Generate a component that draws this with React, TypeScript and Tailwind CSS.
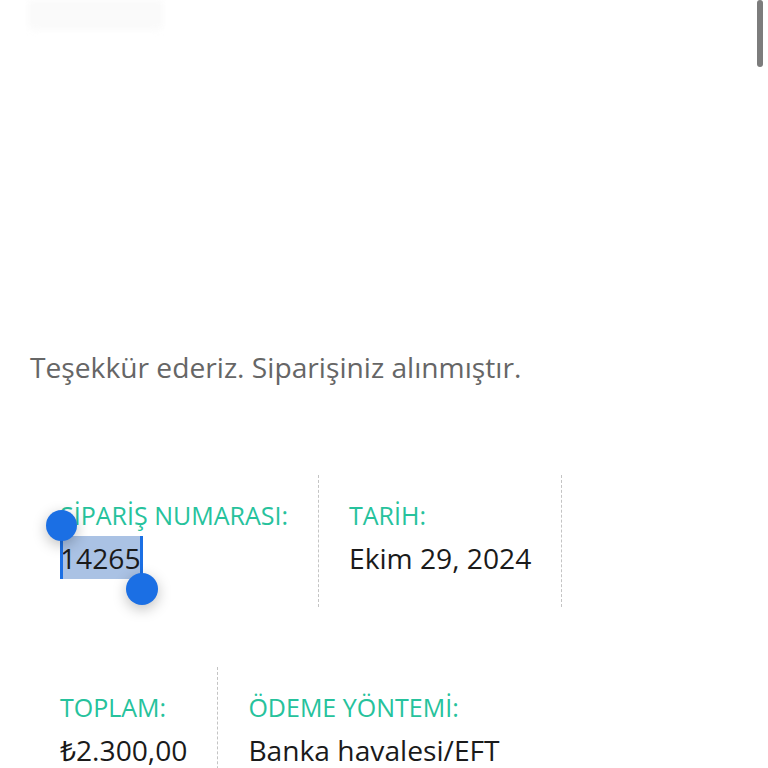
import React from "react";

const ITEMS = [
  { label: "SİPARİŞ NUMARASI:", value: "14265", selected: true },
  { label: "TARİH:", value: "Ekim 29, 2024" },
  { label: "TOPLAM:", value: "₺2.300,00" },
  { label: "ÖDEME YÖNTEMİ:", value: "Banka havalesi/EFT", last: true },
];

function SelectedText({ children }: { children: React.ReactNode }) {
  return (
    <span className="relative inline-block h-[43px] bg-[#aac2e4] pr-[2px]">
      {children}
      {/* caret bars */}
      <span className="absolute left-0 top-0 h-full w-[3px] bg-[#1b6fe4]" />
      <span className="absolute right-0 top-0 h-full w-[3px] bg-[#1b6fe4]" />
      {/* drag handles */}
      <span className="absolute left-[-14px] top-[-26px] h-[31px] w-[31px] rounded-full bg-[#1b6fe4] shadow-[0_4px_14px_rgba(0,0,0,0.25)]" />
      <span className="absolute right-[-15px] bottom-[-26px] h-[32px] w-[32px] rounded-full bg-[#1b6fe4] shadow-[0_4px_14px_rgba(0,0,0,0.25)]" />
    </span>
  );
}

export default function App() {
  return (
    <div className="relative h-[768px] w-full overflow-hidden bg-white font-['Open_Sans',sans-serif]">
      {/* faded header remnant */}
      <div className="ml-[28px] h-[30px] w-[135px] rounded-b-md bg-[#fafafa] blur-[3px]" />

      <p className="mt-[316px] px-[30px] text-[28.2px] leading-[42px] text-[#666666]">
        Teşekkür ederiz. Siparişiniz alınmıştır.
      </p>

      <ul className="ml-[60px] mt-[87px] flex flex-wrap gap-y-[60px]">
        {ITEMS.map((item) => (
          <li
            key={item.label}
            className={`flex flex-col pt-[19px] pb-[27px] ${
              item.last ? "" : "mr-[30px] border-r border-dashed border-[#c4c4c4] pr-[30px]"
            }`}
          >
            <span className="text-[25px] leading-[42px] text-[#26c29c] whitespace-nowrap">{item.label}</span>
            <span className="text-[28.2px] leading-[44px] text-[#1a1a1a] whitespace-nowrap">
              {item.selected ? <SelectedText>{item.value}</SelectedText> : item.value}
            </span>
          </li>
        ))}
      </ul>

      {/* scrollbar thumb */}
      <div className="absolute right-[5px] top-0 h-[67px] w-[6px] rounded-full bg-[#7c7c7c]" />
    </div>
  );
}
